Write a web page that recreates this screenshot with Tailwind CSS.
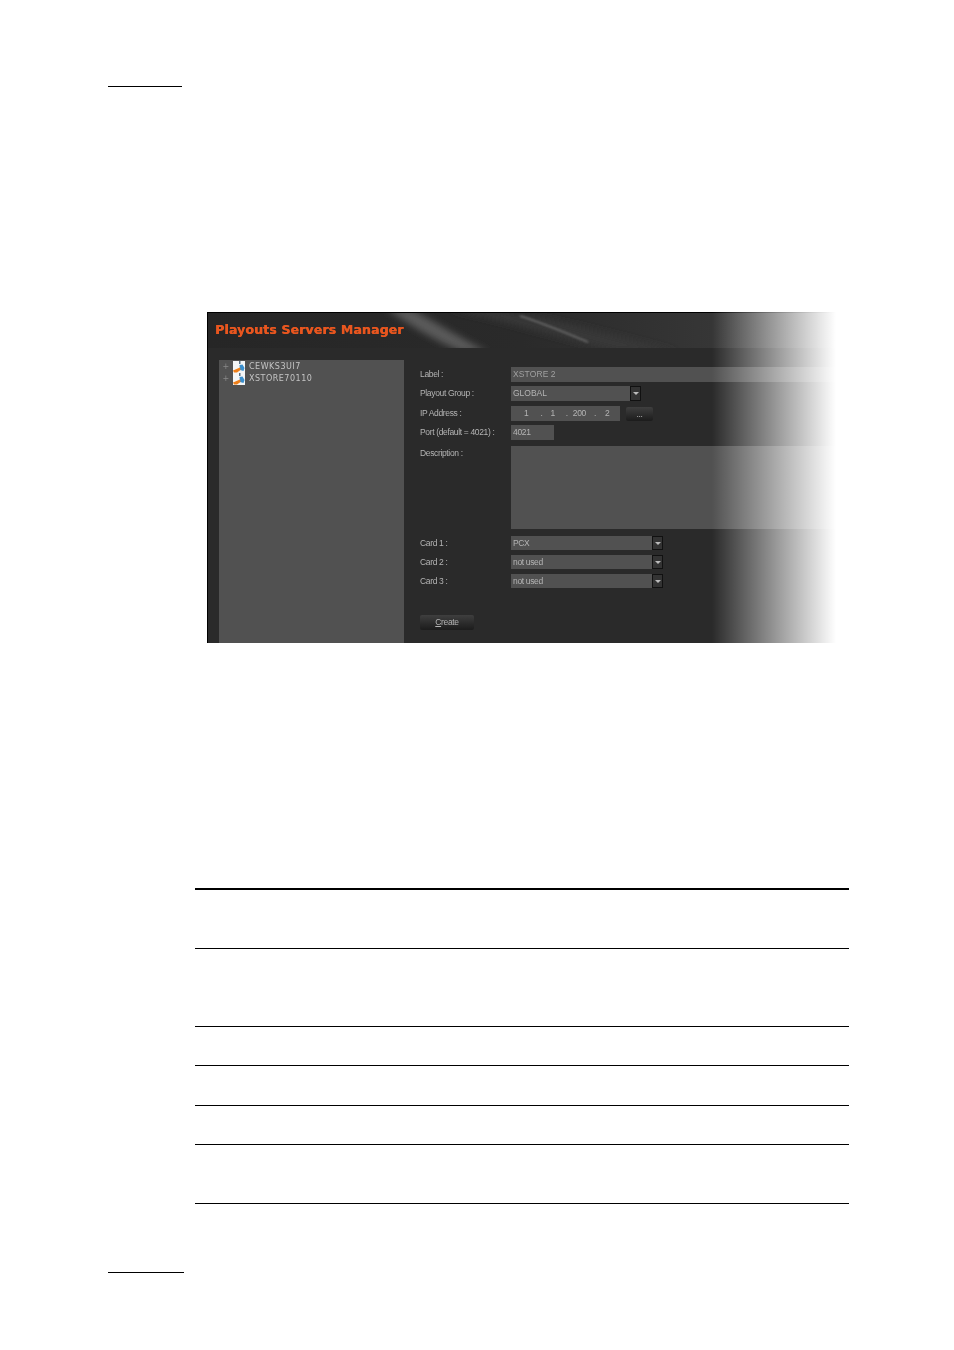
<!DOCTYPE html>
<html lang="en">
<head>
    <meta charset="UTF-8">
    <title>Playouts Servers Manager</title>
    <script src="https://cdn.jsdelivr.net/npm/@tailwindcss/browser@4"></script>
</head>
<body class="bg-white h-[1350px] overflow-hidden font-['Liberation_Sans',sans-serif]">

    <!-- top rule -->
    <div class="pt-[86px] pl-[108px]"><div class="w-[74px] h-px bg-black"></div></div>

    <!-- screenshot -->
    <div class="relative w-[629px] h-[331px] ml-[207px] mt-[225px] bg-[#2a2a2a] border-l border-black overflow-hidden text-[8.5px] tracking-[-0.35px] text-[#b4b4b4] blur-[0.35px]">
        <div class="h-px bg-black"></div>

        <div class="relative h-[35px] bg-gradient-to-r from-[#262626] via-[#2a2a2a] to-[#3e3e3e] overflow-hidden">
            <svg class="absolute inset-0" width="629" height="35" viewBox="0 0 629 35">
                <defs>
                    <filter id="soft" x="-20%" y="-50%" width="140%" height="200%"><feGaussianBlur stdDeviation="3.500"/></filter>
                    <filter id="thin" x="-20%" y="-50%" width="140%" height="200%"><feGaussianBlur stdDeviation="1.200"/></filter>
                </defs>
                <path d="M178 -4 C200 10 222 26 255 39 L280 39 C254 26 226 8 203 -4 Z" fill="#5a5a5a" filter="url(#soft)"/>
                <path d="M240 -4 C290 6 350 24 410 39 L470 39 C400 20 330 2 280 -4 Z" fill="#383838" filter="url(#soft)"/>
                <path d="M312 3 C335 10 358 20 380 29" stroke="#6e6e6e" stroke-width="1.400" fill="none" filter="url(#thin)"/>
            </svg>
            <h1 class="absolute left-[7px] top-[9px] text-[12.5px] leading-[16px] font-bold tracking-[0.15px] text-[#e8561f] font-['DejaVu_Sans',sans-serif] [text-shadow:0.4px_0_0_#e8561f]">Playouts Servers Manager</h1>
        </div>

        <div class="flex pt-[12px] pl-[11px]">
            <!-- tree -->
            <div class="w-[185px] h-[283px] pt-px bg-[#515151] shrink-0 text-[8px] leading-[12px] font-['DejaVu_Sans',sans-serif] tracking-[0.5px] text-[#c4c4c4]">
                <div class="flex items-center h-[12px]">
                    <span class="w-[14px] text-center text-[#8a8a8a]">+</span>
                    <svg class="shrink-0" width="12" height="12" viewBox="0 0 12 12"><rect width="12" height="12" fill="#f4f6f7"/><path d="M6 0 h1.500 v3 h-1.500 Z" fill="#5a7084"/><path d="M6.500 4 L9.500 3.500 L11.500 7 L10.500 10 L7 9 Z" fill="#3a8fce"/><path d="M0 9.500 L7 6.500 L7.500 9 L4 11.500 L1 11.500 Z" fill="#ee7f1a"/></svg>
                    <span class="ml-[4px]">CEWKS3UI7</span>
                </div>
                <div class="flex items-center h-[12px]">
                    <span class="w-[14px] text-center text-[#8a8a8a]">+</span>
                    <svg class="shrink-0" width="12" height="12" viewBox="0 0 12 12"><rect width="12" height="12" fill="#f4f6f7"/><path d="M6 0 h1.500 v3 h-1.500 Z" fill="#5a7084"/><path d="M6.500 4 L9.500 3.500 L11.500 7 L10.500 10 L7 9 Z" fill="#3a8fce"/><path d="M0 9.500 L7 6.500 L7.500 9 L4 11.500 L1 11.500 Z" fill="#ee7f1a"/></svg>
                    <span class="ml-[4px]">XSTORE70110</span>
                </div>
            </div>

            <!-- form -->
            <div class="flex-1 pl-[16px] pt-[7px]">
                <div class="flex items-center h-[15px]">
                    <span class="w-[91px]">Label :</span>
                    <div class="flex-1 h-[15px] bg-[#515151] px-[2px] leading-[15px] text-[#a0a0a0] tracking-[0.1px]">XSTORE 2</div>
                </div>
                <div class="flex items-center h-[15px] mt-[4px]">
                    <span class="w-[91px]">Playout Group :</span>
                    <div class="w-[119px] h-[15px] bg-[#515151] px-[2px] leading-[15px] tracking-[0px]">GLOBAL</div>
                    <div class="w-[11px] h-[15px] bg-[#333] border border-[#111] flex items-center justify-center"><div class="border-x-[3px] border-t-[3px] border-x-transparent border-t-[#bbb]"></div></div>
                </div>
                <div class="flex items-center h-[15px] mt-[5px]">
                    <span class="w-[91px]">IP Address :</span>
                    <div class="w-[109px] h-[15px] bg-[#515151] leading-[15px] flex">
                        <span class="ml-[13px]">1</span><span class="ml-[12px]">.</span>
                        <span class="ml-[8px]">1</span><span class="ml-[11px]">.</span>
                        <span class="ml-[5px]">200</span><span class="ml-[8px]">.</span>
                        <span class="ml-[9px]">2</span>
                    </div>
                    <div class="ml-[6px] w-[27px] h-[14px] rounded-[2px] bg-gradient-to-b from-[#3f3f3f] to-[#1c1c1c] text-center leading-[14px]">...</div>
                </div>
                <div class="flex items-center h-[15px] mt-[4px]">
                    <span class="w-[91px]">Port (default = 4021) :</span>
                    <div class="w-[43px] h-[15px] bg-[#515151] px-[2px] leading-[15px]">4021</div>
                </div>
                <div class="flex mt-[6px]">
                    <span class="w-[91px] pt-px">Description :</span>
                    <div class="flex-1 h-[83px] bg-[#515151]"></div>
                </div>
                <div class="flex items-center h-[14px] mt-[7px]">
                    <span class="w-[91px]">Card 1 :</span>
                    <div class="w-[141px] h-[14px] bg-[#515151] px-[2px] leading-[14px]">PCX</div>
                    <div class="w-[11px] h-[14px] bg-[#333] border border-[#111] flex items-center justify-center"><div class="border-x-[3px] border-t-[3px] border-x-transparent border-t-[#bbb]"></div></div>
                </div>
                <div class="flex items-center h-[14px] mt-[5px]">
                    <span class="w-[91px]">Card 2 :</span>
                    <div class="w-[141px] h-[14px] bg-[#515151] px-[2px] leading-[14px]">not used</div>
                    <div class="w-[11px] h-[14px] bg-[#333] border border-[#111] flex items-center justify-center"><div class="border-x-[3px] border-t-[3px] border-x-transparent border-t-[#bbb]"></div></div>
                </div>
                <div class="flex items-center h-[14px] mt-[5px]">
                    <span class="w-[91px]">Card 3 :</span>
                    <div class="w-[141px] h-[14px] bg-[#515151] px-[2px] leading-[14px]">not used</div>
                    <div class="w-[11px] h-[14px] bg-[#333] border border-[#111] flex items-center justify-center"><div class="border-x-[3px] border-t-[3px] border-x-transparent border-t-[#bbb]"></div></div>
                </div>
                <div class="w-[54px] h-[15px] mt-[27px] rounded-[2px] bg-gradient-to-b from-[#3f3f3f] to-[#1c1c1c] text-center leading-[15px]"><u>C</u>reate</div>
            </div>
        </div>

        <!-- right edge fades out to the page -->
        <div class="absolute top-0 bottom-0 right-0 w-[124px] bg-gradient-to-r from-white/0 to-white"></div>
    </div>

    <!-- empty table -->
    <div class="ml-[195px] w-[654px] mt-[245px] border-t-2 border-black">
        <div class="h-[59px] border-b border-black"></div>
        <div class="h-[78px] border-b border-black"></div>
        <div class="h-[39px] border-b border-black"></div>
        <div class="h-[40px] border-b border-black"></div>
        <div class="h-[39px] border-b border-black"></div>
        <div class="h-[59px] border-b border-black"></div>
    </div>

    <!-- bottom rule -->
    <div class="pt-[68px] pl-[108px]"><div class="w-[76px] h-px bg-black"></div></div>
</body>
</html>
